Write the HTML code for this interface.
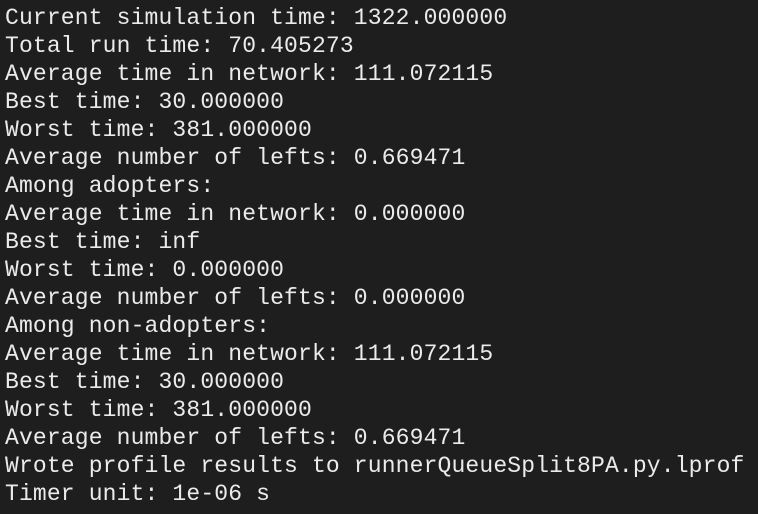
<!DOCTYPE html>
<html><head><meta charset="utf-8"><style>
html,body{margin:0;padding:0;background:#1e1e1e;width:758px;height:514px;overflow:hidden}
pre{margin:0;padding:4px 0 0 5px;font-family:"Liberation Mono",monospace;font-size:23px;line-height:28px;letter-spacing:0.15px;color:#ebebeb}
</style></head><body><pre>Current simulation time: 1322.000000
Total run time: 70.405273
Average time in network: 111.072115
Best time: 30.000000
Worst time: 381.000000
Average number of lefts: 0.669471
Among adopters:
Average time in network: 0.000000
Best time: inf
Worst time: 0.000000
Average number of lefts: 0.000000
Among non-adopters:
Average time in network: 111.072115
Best time: 30.000000
Worst time: 381.000000
Average number of lefts: 0.669471
Wrote profile results to runnerQueueSplit8PA.py.lprof
Timer unit: 1e-06 s</pre></body></html>
